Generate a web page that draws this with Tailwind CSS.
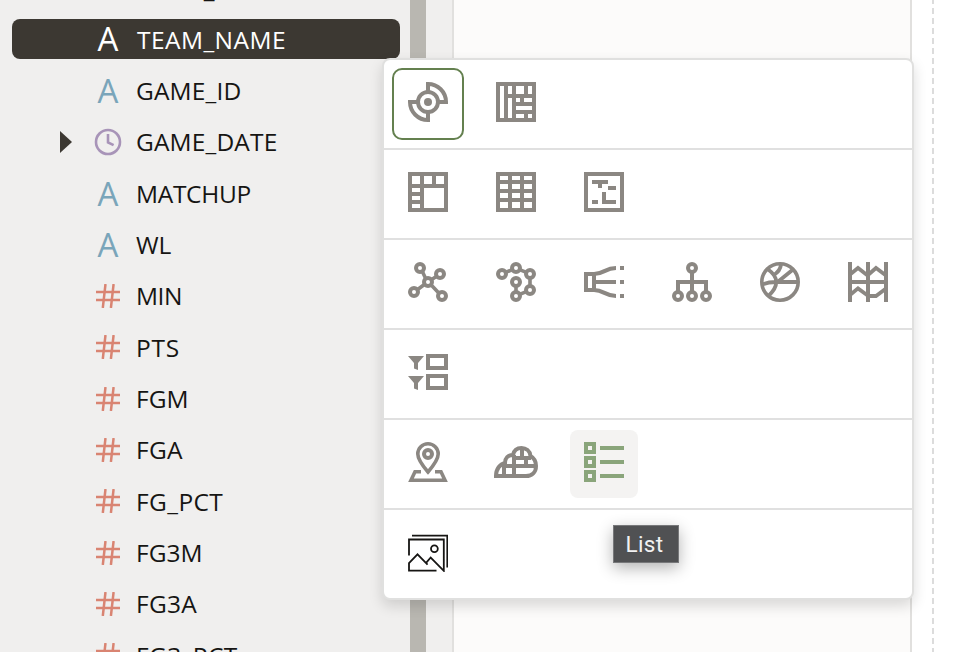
<!DOCTYPE html>
<html lang="en">
<head>
<meta charset="utf-8">
<title>Visualization picker</title>
<script src="https://cdn.jsdelivr.net/npm/@tailwindcss/browser@4"></script>
</head>
<body class="w-[968px] h-[652px] overflow-hidden bg-white font-['Open_Sans','Noto_Sans',sans-serif]">
<svg class="hidden">
  <symbol id="hash" viewBox="0 0 24 24"><path d="M0 8H24M0 16H24M9.5 0L6.8 24M17.6 0L14.9 24" fill="none" stroke="#d98472" stroke-width="2.5"/></symbol>
</svg>
<div class="relative flex w-[968px] h-[652px] overflow-hidden">
  <aside class="w-[410px] h-full overflow-hidden bg-[#f0efee] text-[24.5px] text-[#161513]">
    <ul class="flex flex-col -mt-[37px]">
      <li class="h-[51.33px] shrink-0 flex items-center pl-[137px] pt-0.5"><span class="tracking-[0.5px]">TEAM_ID</span></li>
      <li class="h-[51.33px] shrink-0 flex items-start pl-3 pr-2.5 pt-[4.67px]"><div class="flex items-center w-full h-10 pl-[82px] rounded-lg bg-[#3c3832] text-white"><span class="w-7 text-center text-[33px] leading-10">A</span><span class="ml-[15px] pt-0.5 tracking-[0.45px]">TEAM_NAME</span></div></li>
      <li class="h-[51.33px] shrink-0 flex items-center pl-[94px]"><span class="w-7 text-center text-[33px] leading-10 text-[#7aa5ba]">A</span><span class="ml-3.5 tracking-[0.15px]">GAME_ID</span></li>
      <li class="h-[51.33px] shrink-0 flex items-center pl-[60px]"><svg class="w-3 h-[22px] mb-[1.4px]" viewBox="0 0 12 22"><path d="M0 0L12 11L0 22Z" fill="#3c3832"/></svg><svg class="ml-[22px] mb-[1.4px] w-7 h-7" viewBox="0 0 28 28" fill="none" stroke="#a894b8" stroke-width="2.6"><circle cx="14" cy="14" r="12"/><path d="M14 6V14.5L19.6 17.2"/></svg><span class="ml-3.5 tracking-[0.15px]">GAME_DATE</span></li>
      <li class="h-[51.33px] shrink-0 flex items-center pl-[94px]"><span class="w-7 text-center text-[33px] leading-10 text-[#7aa5ba]">A</span><span class="ml-3.5 tracking-[-0.3px]">MATCHUP</span></li>
      <li class="h-[51.33px] shrink-0 flex items-center pl-[94px]"><span class="w-7 text-center text-[33px] leading-10 text-[#7aa5ba]">A</span><span class="ml-3.5">WL</span></li>
      <li class="h-[51.33px] shrink-0 flex items-center pl-24"><svg class="w-6 h-6 mb-[1.3px]"><use href="#hash"/></svg><span class="ml-4 tracking-[-0.5px]">MIN</span></li>
      <li class="h-[51.33px] shrink-0 flex items-center pl-24"><svg class="w-6 h-6 mb-[1.3px]"><use href="#hash"/></svg><span class="ml-4 tracking-[0.7px]">PTS</span></li>
      <li class="h-[51.33px] shrink-0 flex items-center pl-24"><svg class="w-6 h-6 mb-[1.3px]"><use href="#hash"/></svg><span class="ml-4">FGM</span></li>
      <li class="h-[51.33px] shrink-0 flex items-center pl-24"><svg class="w-6 h-6 mb-[1.3px]"><use href="#hash"/></svg><span class="ml-4 tracking-[0.3px]">FGA</span></li>
      <li class="h-[51.33px] shrink-0 flex items-center pl-24"><svg class="w-6 h-6 mb-[1.3px]"><use href="#hash"/></svg><span class="ml-4 tracking-[0.4px]">FG_PCT</span></li>
      <li class="h-[51.33px] shrink-0 flex items-center pl-24"><svg class="w-6 h-6 mb-[1.3px]"><use href="#hash"/></svg><span class="ml-4">FG3M</span></li>
      <li class="h-[51.33px] shrink-0 flex items-center pl-24"><svg class="w-6 h-6 mb-[1.3px]"><use href="#hash"/></svg><span class="ml-4 tracking-[0.25px]">FG3A</span></li>
      <li class="h-[51.33px] shrink-0 flex items-center pl-24"><svg class="w-6 h-6 mb-[1.3px]"><use href="#hash"/></svg><span class="ml-4 tracking-[0.4px]">FG3_PCT</span></li>
    </ul>
  </aside>
  <div class="w-4 h-full bg-[#b9b7b1]"></div>
  <div class="w-[26px] h-full bg-[#f0efee]"></div>
  <div class="w-[460px] h-full border-x-2 border-[#e1e0de] bg-[#fcfbfa]"></div>
  <div class="ml-5 w-0.5 h-full bg-[repeating-linear-gradient(to_bottom,#dcdcdc_0px,#dcdcdc_4px,#fff_4px,#fff_8px,#dcdcdc_8px,#dcdcdc_10px)]"></div>

  <div class="absolute left-[382px] top-[58px] w-[532px] h-[542px] rounded-lg border-2 border-[#e0e0df] bg-white shadow-[0_6px_14px_rgba(0,0,0,0.14)] flex flex-col divide-y-2 divide-[#e0e0e0] text-[#8b8782]">
    <div class="flex h-[90px] shrink-0">
      <div class="size-[88px] p-2"><div class="size-[72px] rounded-[10px] border-2 border-[#64804f] flex items-center justify-center">
        <svg class="size-10 -mt-1" viewBox="0 0 40 40" fill="none" stroke="currentColor" stroke-width="4"><circle cx="20" cy="20" r="10"/><circle cx="20" cy="20" r="4" fill="currentColor" stroke="none"/><path d="M20 10V2A18 18 0 0 1 38 20H30M20 30V38A18 18 0 0 1 2 20H10"/></svg></div></div>
      <div class="size-[88px] px-6 pt-[22px]"><svg class="size-10" viewBox="0 0 40 40" fill="currentColor" fill-rule="evenodd"><path d="M0 0H40V40H0ZM4 4V36H8V4ZM12 4V12H16V4ZM20 4V12H28V4ZM32 4V12H36V4ZM12 16V36H16V16ZM20 16V20H24V16ZM28 16V20H36V16ZM20 24V28H36V24ZM20 32V36H28V32ZM32 32V36H36V32Z"/></svg></div>
    </div>
    <div class="flex h-[90px] shrink-0">
      <div class="size-[88px] px-6 pt-[22px]"><svg class="size-10" viewBox="0 0 40 40" fill="currentColor" fill-rule="evenodd"><path d="M0 0H40V40H0ZM4 4V12H12V4ZM16 4V12H24V4ZM28 4V12H36V4ZM4 16V20H12V16ZM4 24V28H12V24ZM4 32V36H12V32ZM16 16V36H36V16Z"/></svg></div>
      <div class="size-[88px] px-6 pt-[22px]"><svg class="size-10" viewBox="0 0 40 40" fill="currentColor" fill-rule="evenodd"><path d="M0 0H40V40H0ZM4 4V8H12V4ZM16 4V8H24V4ZM28 4V8H36V4ZM4 12V17H12V12ZM16 12V17H24V12ZM28 12V17H36V12ZM4 21V26H12V21ZM16 21V26H24V21ZM28 21V26H36V21ZM4 30V36H12V30ZM16 30V36H24V30ZM28 30V36H36V30Z"/></svg></div>
      <div class="size-[88px] px-6 pt-[22px]"><svg class="size-10" viewBox="0 0 40 40" fill="currentColor" fill-rule="evenodd"><path d="M0 0H40V40H0ZM4 4V36H36V4Z"/><path d="M8 8H24V12H18V16H14V12H8ZM24 14H32V18H24ZM18 20H22V28H32V32H18ZM8 28H14V32H8Z"/></svg></div>
    </div>
    <div class="flex h-[90px] shrink-0">
      <div class="size-[88px] px-6 pt-[22px]"><svg class="size-10" viewBox="0 0 40 40" fill="none" stroke="currentColor" stroke-width="4"><circle cx="12" cy="6" r="4"/><circle cx="32" cy="12" r="4"/><circle cx="20" cy="20" r="4"/><circle cx="6" cy="30" r="4"/><circle cx="34" cy="34" r="4"/><path stroke-width="3.6" d="M14.2 9.3L17.8 16.7M28.7 14.2L23.3 17.8M16.7 22.3L9.3 27.7M23 22.8L31 31.2"/></svg></div>
      <div class="size-[88px] px-6 pt-[22px]"><svg class="size-10" viewBox="0 0 40 40" fill="none" stroke="currentColor" stroke-width="4"><circle cx="6" cy="12" r="4"/><circle cx="20" cy="6" r="4"/><circle cx="34" cy="12" r="4"/><circle cx="34" cy="28" r="4"/><circle cx="20" cy="34" r="4"/><circle cx="20" cy="20" r="4"/><path stroke-width="3.6" d="M9.7 10.4L16.3 7.6M23.7 7.6L30.3 10.4M34 16V24M30.3 29.6L23.7 32.4M20 30V24"/></svg></div>
      <div class="size-[88px] px-6 pt-[22px]"><svg class="size-10" viewBox="0 0 40 40" fill="none" stroke="currentColor" stroke-width="4"><path d="M2 12H10V28H2ZM12 20H32"/><path d="M10 12C20 12 21 6 32 6M10 28C20 28 21 34 32 34"/><path d="M36 6H40M36 20H40M36 34H40"/></svg></div>
      <div class="size-[88px] px-6 pt-[22px]"><svg class="size-10" viewBox="0 0 40 40" fill="none" stroke="currentColor" stroke-width="4"><circle cx="20" cy="6" r="4"/><circle cx="6" cy="34" r="4"/><circle cx="20" cy="34" r="4"/><circle cx="34" cy="34" r="4"/><path d="M20 10V30M6 30V20H34V30"/></svg></div>
      <div class="size-[88px] px-6 pt-[22px]"><svg class="size-10" viewBox="0 0 40 40" fill="none" stroke="currentColor" stroke-width="4"><circle cx="20" cy="20" r="18.2" stroke-width="3.6"/><path stroke-width="3.8" d="M2 22.5C7 20.5 11 20 17 20H38M17 20.5L33 7.5M7.5 7C19 15 19 24 8.5 34M21 2.5C20.5 7 18 10.5 13.5 13"/></svg></div>
      <div class="size-[88px] px-6 pt-[22px]"><svg class="size-10" viewBox="0 0 40 40" fill="none" stroke="currentColor" stroke-width="4"><path d="M2 0V40M20 0V40M38 0V40M2 20H38"/><path stroke-width="3.8" d="M2 12.5L10 6L19 13M20 13L28 6L38 13.5M2 33L10 26.4L19 33M20 34H28L38 26.5"/></svg></div>
    </div>
    <div class="flex h-[90px] shrink-0">
      <div class="size-[88px] px-6 pt-[22px]"><svg class="size-10" viewBox="0 0 40 40" fill="none" stroke="currentColor" stroke-width="4"><path fill="currentColor" stroke="none" d="M0 4H16L10 11V18L6 16.6V11ZM0 24H16L10 31V38L6 36.6V31Z"/><path d="M20 4H38V16H20ZM20 24H38V36H20Z"/></svg></div>
    </div>
    <div class="flex h-[90px] shrink-0">
      <div class="size-[88px] px-6 pt-[22px]"><svg class="size-10" viewBox="0 0 40 40" fill="none" stroke="currentColor" stroke-width="4"><circle cx="20" cy="12" r="4"/><path stroke-width="3.6" d="M20 30C14 23 9.8 17 9.8 12A10.2 10.2 0 0 1 30.2 12C30.2 17 26 23 20 30Z"/><path stroke-width="3.6" d="M13 29.8H7L3 38.2H37L33 29.8H27"/></svg></div>
      <div class="size-[88px] px-6 pt-[22px]"><svg class="size-10 overflow-visible" viewBox="0 0 40 40" fill="none" stroke="currentColor" stroke-width="4"><path d="M0 34C0 27 4 22 9 21C9 16 12 13 17 13C18 8 21 6 25.5 6C30 6 34 9 34.5 14C38 16 40 19 40 24C40 30 36 34 30 34Z"/><path d="M17 16H35M6 24H39M8 22V34M18 13V34M26 6V16M30 16V24"/></svg></div>
      <div class="size-[88px] pl-[10px] pt-[10px]"><div class="size-[68px] rounded-lg bg-[#f4f3f2] text-[#8aa57b] pl-3.5 pt-3"><svg class="size-10" viewBox="0 0 40 40" fill="none" stroke="currentColor" stroke-width="4"><path d="M2 2H10V10H2ZM2 16H10V24H2ZM2 30H10V38H2ZM16 6H40M16 20H40M16 34H40"/></svg></div></div>
    </div>
    <div class="flex h-[88px] shrink-0">
      <div class="size-[88px] px-6 pt-[22px]"><svg class="size-10 text-[#161513]" viewBox="0 0 40 40" fill="none" stroke="currentColor" stroke-width="1.8"><path d="M4 3.7H39.3V35.5M1 23.5V7.5H35.8V38.8L22.7 25.5L18.3 30.6M19.6 32.6L9.5 22.4L1 31V38.6H28.5"/><circle cx="26.4" cy="16.7" r="3.4"/></svg></div>
    </div>
  </div>
  <div class="absolute left-[613px] top-[525px] w-[66px] h-[38px] border border-[#77787a] bg-[#505153] shadow-[0_5px_16px_rgba(0,0,0,0.3)] flex items-center justify-center pr-[3px] text-[22.5px] leading-none text-[#f2f2f2] font-[Roboto] tracking-[0.3px]"><span>List</span></div>
</div>
</body>
</html>
